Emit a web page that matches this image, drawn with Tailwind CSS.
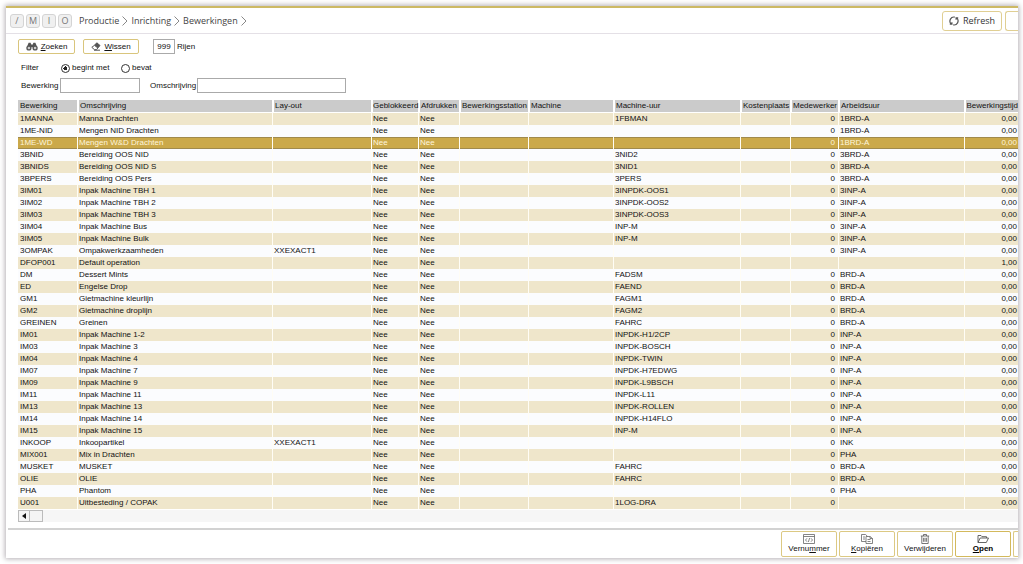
<!DOCTYPE html>
<html lang="nl">
<head>
<meta charset="utf-8">
<title>Bewerkingen</title>
<script src="https://cdn.jsdelivr.net/npm/@tailwindcss/browser@4"></script>
</head>
<body class="bg-white min-h-screen pt-[6px] pl-[6px] pr-[5px] pb-[6px] flex overflow-hidden text-[8px] leading-[12px] text-[#111] font-['Liberation_Sans',Arial,sans-serif]">
<div class="flex-1 min-w-0 flex flex-col bg-white border-t-2 border-[#cdb965] shadow-[0_0_5px_1px_#b5b0b5] overflow-hidden">

  <header class="h-[26px] shrink-0 flex items-center pl-[4px] border-b border-[#e4e0e6] font-['Open_Sans','Noto_Sans',sans-serif] text-[9px] text-[#444]">
    <div class="flex gap-[2px] text-[#777]">
      <button class="size-[14px] rounded-[3px] border border-[#d4d4d4] bg-[#f0f0f0] flex items-center justify-center">/</button>
      <button class="size-[14px] rounded-[3px] border border-[#d4d4d4] bg-[#f0f0f0] flex items-center justify-center">M</button>
      <button class="size-[14px] rounded-[3px] border border-[#d4d4d4] bg-[#f0f0f0] flex items-center justify-center">I</button>
      <button class="size-[14px] rounded-[3px] border border-[#d4d4d4] bg-[#f0f0f0] flex items-center justify-center">O</button>
    </div>
    <nav class="flex items-center gap-[3px] ml-[7px]">
      <a href="#">Productie</a>
      <svg class="w-[6px] h-[10px]" viewBox="0 0 6 10" fill="none" stroke="#888"><path d="M.5.5 5 5 .5 9.5"/></svg>
      <a href="#">Inrichting</a>
      <svg class="w-[6px] h-[10px]" viewBox="0 0 6 10" fill="none" stroke="#888"><path d="M.5.5 5 5 .5 9.5"/></svg>
      <a href="#">Bewerkingen</a>
      <svg class="w-[6px] h-[10px]" viewBox="0 0 6 10" fill="none" stroke="#888"><path d="M.5.5 5 5 .5 9.5"/></svg>
    </nav>
    <div class="ml-auto flex gap-[3px] text-[#333]">
      <button class="w-[60px] h-[20px] rounded-[3px] border border-[#e0cf93] flex items-center justify-center gap-[4px]">
        <svg class="size-[10px]" viewBox="0 0 10 10" fill="none" stroke="#555" stroke-width="1.2"><path d="M5.800 1.100A4 4 0 0 0 2.200 7.900M.8 8.200h2.100V6.200M4.200 8.900A4 4 0 0 0 7.800 2.100M9.200 1.800H7.100v2"/></svg>
        Refresh
      </button>
      <button aria-label="Meer" class="w-[13px] h-[20px] rounded-l-[3px] border border-r-0 border-[#e0cf93]"></button>
    </div>
  </header>

  <form class="shrink-0 pl-[12px] pt-[5px]">
    <div class="flex items-center">
      <button type="button" class="w-[57px] h-[15px] rounded-[2px] border border-[#d9c57c] flex items-center justify-center gap-[3px]">
        <svg class="w-[12px] h-[9px]" viewBox="0 0 12 9" fill="#555"><path d="M2.6.8h2l.6 1.6h1.6L7.4.8h2l1.8 4.4H.8z"/><circle cx="2.9" cy="6" r="2.6"/><circle cx="9.1" cy="6" r="2.6"/><circle cx="2.9" cy="6" r="1.3" fill="#ccc"/><circle cx="9.1" cy="6" r="1.3" fill="#ccc"/></svg>
        <span><u>Z</u>oeken</span>
      </button>
      <button type="button" class="ml-[8px] w-[56px] h-[15px] rounded-[2px] border border-[#d9c57c] flex items-center justify-center gap-[3px]">
        <svg class="w-[10px] h-[9px]" viewBox="0 0 10 9" fill="none" stroke="#555"><path d="M5.800.8 9 3.500 6.800 6 3.500 3.300z" fill="#555"/><path d="M3.500 3.300.8 5.300l2.700 2.400h2L6.800 6M3 8.200h6" /></svg>
        <span><u>W</u>issen</span>
      </button>
      <input id="rows" value="999" class="ml-[14px] w-[22px] h-[15px] border border-[#aaa] text-center">
      <label for="rows" class="ml-[2px]">Rijen</label>
    </div>
    <div class="flex items-center mt-[8px] pl-[3px] h-[12px]">
      <span class="w-[40px]">Filter</span>
      <label class="flex items-center gap-[2px] w-[60px]"><input type="radio" name="f" checked class="appearance-none size-[9px] rounded-full border border-[#333] checked:bg-[radial-gradient(#222_0_2px,white_2px)]">begint met</label>
      <label class="flex items-center gap-[2px]"><input type="radio" name="f" class="appearance-none size-[9px] rounded-full border border-[#333] checked:bg-[radial-gradient(#222_0_2px,white_2px)]">bevat</label>
    </div>
    <div class="flex items-center mt-[4px] pl-[3px]">
      <label for="bew" class="w-[39px]">Bewerking</label>
      <input id="bew" class="w-[80px] h-[15px] border border-[#aaa] px-[2px]">
      <label for="oms" class="ml-[10px] w-[47px]">Omschrijving</label>
      <input id="oms" class="w-[149px] h-[15px] border border-[#aaa] px-[2px]">
    </div>
  </form>

  <main class="pl-[12px] pt-[7px]">
    <table class="w-full table-fixed border-separate border-spacing-0 whitespace-nowrap">
      <colgroup>
        <col class="w-[59px]"><col><col class="w-[99px]"><col class="w-[47px]"><col class="w-[41px]"><col class="w-[69px]"><col class="w-[85px]"><col class="w-[127px]"><col class="w-[50px]"><col class="w-[48px]"><col class="w-[126px]"><col class="w-[54px]">
      </colgroup>
      <thead><tr id="head" class="h-[13px] bg-[#cbcbcb]"></tr></thead>
      <tbody id="body"></tbody>
    </table>
    <div class="mt-[1px] h-[12px] bg-[#f6f6f6] flex">
      <button aria-label="Naar links" class="w-[12px] border border-[#bbb] bg-[#f4f4f4] flex items-center justify-center"><svg class="w-[4px] h-[6px]" viewBox="0 0 4 6"><path d="M4 0v6L0 3z" fill="#111"/></svg></button>
      <div class="w-[13px] border border-l-0 border-[#bbb] bg-[#f4f4f4]"></div>
    </div>
  </main>

  <footer class="mt-auto ml-[2px] h-[30px] shrink-0 border-t-2 border-[#d2d2d2] flex justify-end gap-[2px] pt-[1px] pb-[1px]">
    <button class="w-[56px] rounded-[2px] border border-[#dcc983] flex flex-col items-center justify-center leading-[10px]">
      <svg class="w-[12px] h-[10px] shrink-0" viewBox="0 0 12 10" fill="none" stroke="#666" stroke-width=".8"><path d="M.5.5h11v9H.5zM.5 2.5h11M4 4.3 2.5 6 4 7.7M8 4.3 9.5 6 8 7.7M6.6 4 5.4 8"/></svg>
      <span>Vernu<u>m</u>mer</span>
    </button>
    <button class="w-[56px] rounded-[2px] border border-[#dcc983] flex flex-col items-center justify-center leading-[10px]">
      <svg class="w-[12px] h-[10px] shrink-0" viewBox="0 0 12 10" fill="none" stroke="#666" stroke-width=".8"><path d="M5 7.500H.5v-7h4l2 1.800M2 3h2M2 5h2"/><path d="M5 2.500h4l2.500 2v5H5zM9 2.500v2h2.500M6.500 5.500h3M6.500 7.500h3"/></svg>
      <span><u>K</u>opiëren</span>
    </button>
    <button class="w-[56px] rounded-[2px] border border-[#dcc983] flex flex-col items-center justify-center leading-[10px]">
      <svg class="w-[10px] h-[10px] shrink-0" viewBox="0 0 10 10" fill="none" stroke="#555" stroke-width=".8"><path d="M.8 2h8.400M3.500 2V.5h3V2M1.800 2v7.500h6.400V2M3.600 3.800v4M5 3.800v4M6.400 3.800v4"/></svg>
      <span>Verwi<u>j</u>deren</span>
    </button>
    <button class="w-[56px] rounded-[2px] border border-[#d3b95c] flex flex-col items-center justify-center leading-[10px] font-bold text-black">
      <svg class="w-[12px] h-[10px] shrink-0" viewBox="0 0 12 10" fill="none" stroke="#555" stroke-width=".9"><path d="M1 8.500v-7h3l1 1.200h4.500V4M1 8.500 3.200 4h8.300L9.300 8.500z"/></svg>
      <span><u>O</u>pen</span>
    </button>
    <button aria-label="Meer" class="w-[5px] rounded-l-[2px] border border-r-0 border-[#dcc983]"></button>
  </footer>
</div>

<script>
const heads = ['Bewerking','Omschrijving','Lay-out','Geblokkeerd','Afdrukken','Bewerkingsstation','Machine','Machine-uur','Kostenplaats','Medewerker','Arbeidsuur','Bewerkingstijd'];
// code | omschrijving | lay-out | machine-uur | arbeidsuur | tijd
const data = `1MANNA|Manna Drachten||1FBMAN|1BRD-A
1ME-NID|Mengen NID Drachten|||1BRD-A
1ME-WD|Mengen W&D Drachten|||1BRD-A
3BNID|Bereiding OOS NID||3NID2|3BRD-A
3BNIDS|Bereiding OOS NID S||3NID1|3BRD-A
3BPERS|Bereiding OOS Pers||3PERS|3BRD-A
3IM01|Inpak Machine TBH 1||3INPDK-OOS1|3INP-A
3IM02|Inpak Machine TBH 2||3INPDK-OOS2|3INP-A
3IM03|Inpak Machine TBH 3||3INPDK-OOS3|3INP-A
3IM04|Inpak Machine Bus||INP-M|3INP-A
3IM05|Inpak Machine Bulk||INP-M|3INP-A
3OMPAK|Ompakwerkzaamheden|XXEXACT1||3INP-A
DFOP001|Default operation||||1,00
DM|Dessert Mints||FADSM|BRD-A
ED|Engelse Drop||FAEND|BRD-A
GM1|Gietmachine kleurlijn||FAGM1|BRD-A
GM2|Gietmachine droplijn||FAGM2|BRD-A
GREINEN|Greinen||FAHRC|BRD-A
IM01|Inpak Machine 1-2||INPDK-H1/2CP|INP-A
IM03|Inpak Machine 3||INPDK-BOSCH|INP-A
IM04|Inpak Machine 4||INPDK-TWIN|INP-A
IM07|Inpak Machine 7||INPDK-H7EDWG|INP-A
IM09|Inpak Machine 9||INPDK-L9BSCH|INP-A
IM11|Inpak Machine 11||INPDK-L11|INP-A
IM13|Inpak Machine 13||INPDK-ROLLEN|INP-A
IM14|Inpak Machine 14||INPDK-H14FLO|INP-A
IM15|Inpak Machine 15||INP-M|INP-A
INKOOP|Inkoopartikel|XXEXACT1||INK
MIX001|Mix in Drachten|||PHA
MUSKET|MUSKET||FAHRC|BRD-A
OLIE|OLIE||FAHRC|BRD-A
PHA|Phantom|||PHA
U001|Uitbesteding / COPAK||1LOG-DRA|`.split('\n').map(l => l.split('|'));

heads.forEach((h, k) => {
  const th = document.createElement('th');
  th.textContent = h;
  th.className = k === 0 ? 'p-0 pl-[2px] text-left font-normal border-b border-white'
    : k === 11 ? 'p-0 text-right font-normal border-l-2 border-b border-white'
    : k === 3 ? 'p-0 text-left font-normal border-l-2 border-b border-white'
    : 'p-0 pl-[1px] text-left font-normal border-l-2 border-b border-white';
  document.getElementById('head').append(th);
});
data.forEach((r, i) => {
  const tr = document.createElement('tr');
  tr.className = i === 2 ? 'h-[12px] bg-[#cba94a] text-[#fff6dc] shadow-[inset_0_1px_#a08a4c,inset_0_-1px_#a08a4c]'
    : i % 2 ? 'h-[12px] bg-[#fbfcfe]' : 'h-[12px] bg-[#efe6cb]';
  const worker = r[0] === 'DFOP001' ? '' : '0';
  const cells = [r[0], r[1], r[2], 'Nee', 'Nee', '', '', r[3], '', worker, r[4], r[5] || '0,00'];
  cells.forEach((c, k) => {
    const td = document.createElement('td');
    td.textContent = c;
    td.className = k === 9 ? 'p-0 pr-[3px] text-right border-l border-[#fffdf5]'
      : k === 11 ? 'p-0 pr-[1px] text-right border-l border-[#fffdf5]'
      : k === 0 ? 'p-0 pl-[2px]'
      : 'p-0 pl-[1px] border-l border-[#fffdf5]';
    tr.append(td);
  });
  document.getElementById('body').append(tr);
});
</script>
</body>
</html>
